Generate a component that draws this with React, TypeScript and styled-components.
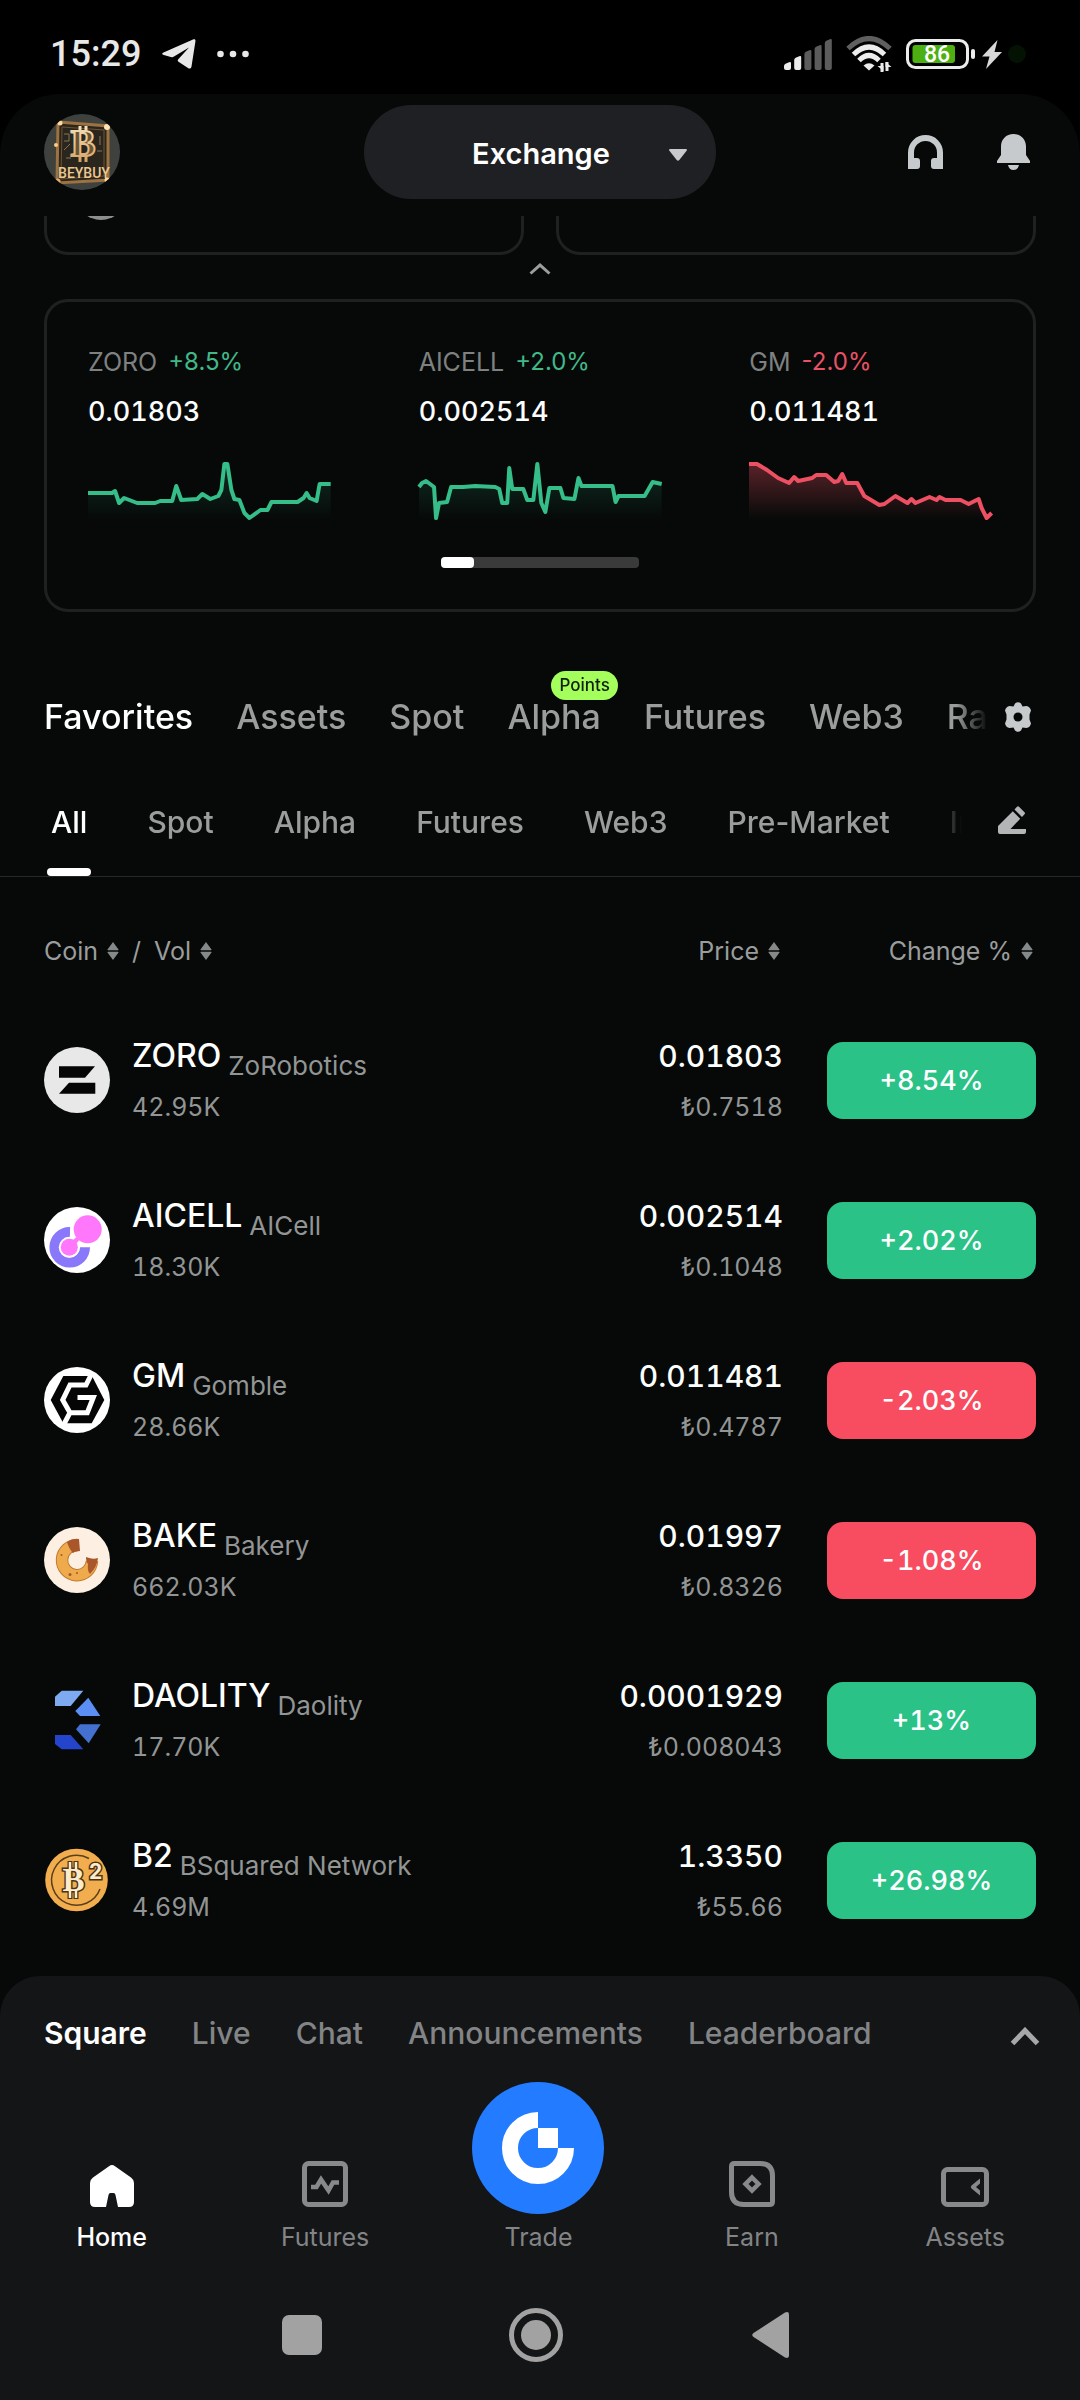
import React, { useState } from "react";
import styled, { createGlobalStyle } from "styled-components";

const color = {
  green: "#2bc287",
  red: "#f84c60",
  white: "#fdfefe",
  soft: "#c6cacc",
  mid: "#9b9d9d",
  dim: "#828486",
  line: "#1f2121",
  surface: "#060908",
  sheet: "#141517",
};

const GlobalStyle = createGlobalStyle`
  * { box-sizing: border-box; }
  body {
    margin: 0;
    background: #000;
    color: ${color.white};
    font-family: Inter, "Liberation Sans", sans-serif;
    -webkit-font-smoothing: antialiased;
  }
  button, select { font: inherit; color: inherit; background: none; border: 0; padding: 0; margin: 0; }
  svg { display: block; flex: none; }
`;

const Page = styled.div`
  min-height: 100vh;
  display: flex;
  flex-direction: column;
`;

/* ---------- status bar ---------- */

const StatusBar = styled.div`
  height: 94px;
  padding: 14px 54px 0 50px;
  display: flex;
  align-items: center;
  justify-content: space-between;
`;

const StatusGroup = styled.div<{ $gap: number }>`
  display: flex;
  align-items: center;
  gap: ${(p) => p.$gap}px;
`;

const Clock = styled.time`
  font: 500 36px/44px Roboto, sans-serif;
  color: #e8e8e8;
`;

/* ---------- app shell ---------- */

const Shell = styled.main`
  flex: 1;
  display: flex;
  flex-direction: column;
  background: ${color.surface};
  border-radius: 60px 60px 0 0;
`;

const Header = styled.header`
  display: grid;
  grid-template-columns: 1fr auto 1fr;
  align-items: center;
  padding: 11px 44px 17px;
`;

const IconButton = styled.button`
  display: flex;
  justify-content: center;
  align-items: center;
  cursor: pointer;
`;

const HeaderActions = styled.div`
  display: flex;
  justify-content: flex-end;
  gap: 54px;
  padding-right: 6px;
`;

const PickerWrap = styled.label`
  position: relative;
  display: block;
`;

const Picker = styled.select`
  appearance: none;
  width: 352px;
  height: 94px;
  padding: 2px 0 0 2px;
  border-radius: 47px;
  background: #1f2023;
  color: #fff;
  font-size: 29px;
  font-weight: 600;
  text-align: center;
  text-align-last: center;
`;

const PickerCaret = styled.svg`
  position: absolute;
  right: 29px;
  top: 44px;
  pointer-events: none;
`;

const CutCards = styled.div`
  height: 39px;
  margin: 0 44px;
  display: flex;
  align-items: flex-end;
  gap: 32px;
  overflow: hidden;
`;

const CutCard = styled.div`
  flex: 1;
  height: 120px;
  padding: 32px 29px;
  display: flex;
  align-items: flex-end;
  border: 3px solid ${color.line};
  border-radius: 24px;
`;

const CutAvatar = styled.div`
  width: 50px;
  height: 50px;
  border-radius: 50%;
  background: #8d8f8f;
`;

const Collapse = styled(IconButton)`
  height: 44px;
  padding-bottom: 16px;
`;

/* ---------- market card ---------- */

const MarketCard = styled.section`
  margin: 0 44px;
  padding: 45px 41px 41px;
  border: 3px solid ${color.line};
  border-radius: 24px;
`;

const Quotes = styled.div`
  display: grid;
  grid-template-columns: repeat(3, 1fr);
  gap: 88px;
`;

const QuoteHead = styled.div`
  display: flex;
  gap: 11px;
  font-size: 25px;
  line-height: 30px;
  color: #7f8181;
  white-space: nowrap;
`;

const Delta = styled.span<{ $up: boolean }>`
  font-size: 24px;
  color: ${(p) => (p.$up ? "#42b889" : "#e75266")};
`;

const QuotePrice = styled.div`
  margin: 17px 0 32px;
  font-size: 27px;
  line-height: 36px;
  font-weight: 500;
  font-variant-numeric: tabular-nums;
`;

const Spark = styled.svg`
  width: 100%;
  height: 60px;
  overflow: visible;
`;

const Pager = styled.div`
  width: 198px;
  height: 11px;
  margin: 35px auto 0;
  border-radius: 4px;
  background: #3a3a3a;
`;

const PagerThumb = styled.div`
  width: 33px;
  height: 11px;
  border-radius: 4px;
  background: #fff;
`;

/* ---------- tabs ---------- */

const TabBar = styled.div<{ $top?: number; $right: number; $line?: boolean; $h: number }>`
  display: flex;
  align-items: stretch;
  justify-content: space-between;
  margin-top: ${(p) => p.$top ?? 0}px;
  padding-right: ${(p) => p.$right}px;
  height: ${(p) => p.$h}px;
  border-bottom: ${(p) => (p.$line ? `1px solid #262828` : "0")};
`;

const TabScroll = styled.div<{ $left: number; $gap: number; $fade: number }>`
  flex: 1;
  min-width: 0;
  display: flex;
  gap: ${(p) => p.$gap}px;
  padding-left: ${(p) => p.$left}px;
  margin-right: 16px;
  overflow: hidden;
  mask-image: linear-gradient(to left, transparent ${(p) => p.$fade}px, #000 ${(p) => p.$fade + 32}px);
`;

const MainTab = styled.button<{ $on: boolean }>`
  position: relative;
  flex: none;
  font-size: 34px;
  line-height: 40px;
  font-weight: 500;
  color: ${(p) => (p.$on ? "#fff" : color.mid)};
  cursor: pointer;
`;

const Badge = styled.span`
  position: absolute;
  top: 0;
  left: 44px;
  height: 29px;
  padding: 0 8px;
  border-radius: 15px;
  background: #a4ff5c;
  color: #10200a;
  font-size: 17px;
  line-height: 29px;
`;

const SubTab = styled.button<{ $on: boolean }>`
  flex: none;
  display: flex;
  flex-direction: column;
  justify-content: space-between;
  padding: 41px 4px 0;
  font-size: 30px;
  line-height: 36px;
  font-weight: 500;
  color: ${(p) => (p.$on ? "#fff" : color.mid)};
  cursor: pointer;
  &::after {
    content: "";
    align-self: stretch;
    margin: 0 -4px;
    height: 8px;
    border-radius: 4px;
    background: ${(p) => (p.$on ? "#fff" : "transparent")};
  }
`;

/* ---------- coin table ---------- */

const TableWrap = styled.div`
  flex: 1;
  padding: 0 44px 15px;
`;

const Table = styled.table`
  width: 100%;
  border-collapse: collapse;
`;

const Th = styled.th<{ $right?: boolean }>`
  height: 123px;
  padding: 24px ${(p) => (p.$right ? 3 : 0)}px 0 0;
  font-size: 25px;
  line-height: 32px;
  font-weight: 400;
  color: ${color.mid};
  text-align: ${(p) => (p.$right ? "right" : "left")};
`;

const SortGroup = styled.span`
  display: inline-flex;
  gap: 13px;
`;

const SortButton = styled.button`
  display: inline-flex;
  align-items: center;
  gap: 9px;
  cursor: pointer;
`;

const Td = styled.td`
  height: 160px;
  padding: 0;
  vertical-align: middle;
`;

const ChangeTd = styled(Td)`
  width: 253px;
  padding-left: 44px;
`;

const CoinCell = styled.div`
  display: flex;
  align-items: center;
  gap: 22px;
`;

const CoinTitle = styled.div`
  display: flex;
  align-items: flex-start;
  gap: 7px;
`;

const Ticker = styled.span`
  font-size: 32px;
  line-height: 36px;
  font-weight: 500;
  color: #fff;
`;

const CoinName = styled.span`
  margin-top: 12px;
  font-size: 26px;
  line-height: 32px;
  color: #939595;
`;

const SubValue = styled.div<{ $gap: number }>`
  margin-top: ${(p) => p.$gap}px;
  font-size: 25px;
  line-height: 32px;
  color: #939595;
  font-variant-numeric: tabular-nums;
`;

const PriceCell = styled.div`
  text-align: right;
  font-size: 30px;
  line-height: 36px;
  font-weight: 500;
  font-variant-numeric: tabular-nums;
  ${SubValue} { font-weight: 400; }
`;

const ChangeButton = styled.button<{ $up: boolean }>`
  display: block;
  width: 100%;
  height: 77px;
  border-radius: 16px;
  background: ${(p) => (p.$up ? color.green : color.red)};
  color: #fff;
  font-size: 27px;
  font-weight: 500;
  font-variant-numeric: tabular-nums;
  cursor: pointer;
`;

/* ---------- bottom sheet ---------- */

const Sheet = styled.footer`
  background: ${color.sheet};
  border-radius: 40px 40px 0 0;
`;

const SheetBack = styled.div`
  position: sticky;
  bottom: 0;
  background: ${color.surface};
`;

const SheetTabs = styled.div`
  height: 106px;
  padding: 8px 40px 0 44px;
  display: flex;
  align-items: center;
  gap: 45px;
`;

const SheetTab = styled.button<{ $on: boolean }>`
  font-size: 30px;
  line-height: 36px;
  font-weight: ${(p) => (p.$on ? 600 : 500)};
  color: ${(p) => (p.$on ? "#fff" : color.dim)};
  cursor: pointer;
`;

const SheetToggle = styled(IconButton)`
  margin-left: auto;
  padding-top: 6px;
`;

const Nav = styled.nav`
  display: grid;
  grid-template-columns: repeat(5, 1fr);
  padding: 0 8px 0 5px;
  height: 170px;
`;

const NavItem = styled.a<{ $on?: boolean; $gap?: number }>`
  display: flex;
  flex-direction: column;
  align-items: center;
  justify-content: flex-end;
  gap: ${(p) => p.$gap ?? 15}px;
  font-size: 25px;
  line-height: 30px;
  font-weight: ${(p) => (p.$on ? 500 : 400)};
  color: ${(p) => (p.$on ? "#fff" : color.dim)};
  text-decoration: none;
`;

const SystemNav = styled.div`
  height: 148px;
  padding: 18px 8px 0 0;
  display: flex;
  align-items: center;
  justify-content: center;
  gap: 180px;
`;

const SystemButton = styled(IconButton)`
  width: 54px;
  height: 54px;
`;

/* ---------- drawings ---------- */

const Telegram = () => (
  <svg width="34" height="30" viewBox="0 0 34 30" fill="#e8e8e8">
    <path d="M1.500 13.500 31 .6c2-.8 2.700 0 2.400 2L29.500 27.500c-.4 2-1.800 2.600-3.500 1.500l-9.500-6.200c-1-.8-1-1.600-.2-2.500L27 8.500 12 17.600c-1.200.7-2 .8-3.200.4L1.800 15.900c-2-.6-2-1.700-.3-2.400z" />
  </svg>
);

const Dots = () => (
  <svg width="32" height="8" viewBox="0 0 32 8" fill="#e8e8e8">
    <circle cx="3.500" cy="4" r="3.300" />
    <circle cx="16" cy="4" r="3.300" />
    <circle cx="28.500" cy="4" r="3.300" />
  </svg>
);

const Signal = () => (
  <svg width="48" height="31" viewBox="0 0 48 31">
    {[8, 14, 20, 25, 31].map((h, i) => (
      <path
        key={h}
        d={`M${i * 10.2} ${31 - h + 4}q0-1.500 1.500-2.200l3.500-1.600q2-.8 2 1V29q0 2-2 2h-3q-2 0-2-2z`}
        fill={i < 2 ? "#ececec" : "#5c5c5c"}
      />
    ))}
  </svg>
);

const Wifi = () => (
  <svg width="46" height="36" viewBox="0 0 46 36" fill="none">
    <path d="M2 12.500Q23-7.500 44 12.500" stroke="#5f5f5f" strokeWidth="5" />
    <path d="M7.500 18.500Q23 3.500 38.500 18.500" stroke="#ececec" strokeWidth="5" />
    <path d="M13 24.500Q23 14.500 33 24.500" stroke="#ececec" strokeWidth="5" />
    <path d="M17.500 29.500Q23 25 28.500 29.500L23 34.500z" fill="#ececec" />
    <path d="M36 36v-9M41 26v9" stroke="#ececec" strokeWidth="3" />
    <path d="M31.500 30h6v5zM45.500 31h-6v-5z" fill="#ececec" />
  </svg>
);

const Battery = () => (
  <svg width="70" height="30" viewBox="0 0 70 30">
    <rect x="1.500" y="1.500" width="60" height="27" rx="8" fill="none" stroke="#ececec" strokeWidth="3" />
    <rect x="6.500" y="6" width="42.500" height="18" rx="3" fill="#4caf12" />
    <rect x="65" y="10" width="4" height="10" rx="2" fill="#ececec" />
    <text x="31" y="23" textAnchor="middle" fontFamily="Roboto, sans-serif" fontWeight="500" fontSize="23" fill="#fff">
      86
    </text>
  </svg>
);

const Bolt = () => (
  <svg width="20" height="29" viewBox="0 0 20 29">
    <path d="M15.500 0 0 16.500h7.500L4 29 20 12h-7.500z" fill="#d8d8d8" />
  </svg>
);

const CameraDot = () => (
  <svg width="18" height="18" viewBox="0 0 18 18">
    <circle cx="9" cy="9" r="9" fill="#041204" />
  </svg>
);

const Avatar = () => (
  <svg width="76" height="76" viewBox="0 0 76 76">
    <defs>
      <radialGradient id="av" cx="50%" cy="50%" r="50%">
        <stop offset="0" stopColor="#4a3c28" />
        <stop offset="1" stopColor="#3d4240" />
      </radialGradient>
      <linearGradient id="gold" x1="0" y1="0" x2="0" y2="1">
        <stop offset="0" stopColor="#f6e3bd" />
        <stop offset="1" stopColor="#d3a363" />
      </linearGradient>
      <clipPath id="avClip">
        <circle cx="38" cy="38" r="38" />
      </clipPath>
    </defs>
    <g clipPath="url(#avClip)">
      <rect width="76" height="76" fill="url(#av)" />
      <path d="M14 8 64 12 64 66 13 69z" fill="#2b261d" stroke="#9c7240" strokeWidth="3" />
      <path d="M18 13 60 16 60 62 17 65z" fill="none" stroke="#6d5433" strokeWidth="1" />
      <path d="M20 20h5v7h-5M20 36l6-6M22 44h5M56 22v9M53 37h5" stroke="#84755a" fill="none" />
      <path d="M36 12v6M42 12v6M36 42v6M42 42v6" stroke="url(#gold)" strokeWidth="3" />
      <text x="39" y="42" textAnchor="middle" fontFamily="Liberation Serif, serif" fontWeight="700" fontSize="37" fill="#6b5332" stroke="url(#gold)" strokeWidth="2">
        B
      </text>
      <text x="40" y="64" textAnchor="middle" fontFamily="Roboto, sans-serif" fontWeight="500" fontSize="14" fill="#ecc993">
        BEYBUY
      </text>
      <circle cx="16" cy="9" r="2.500" fill="#ffd9a0" />
      <circle cx="63" cy="13" r="3" fill="#ffe2b8" />
      <circle cx="12" cy="31" r="2" fill="#ffca85" />
      <circle cx="63" cy="66" r="2.500" fill="#ffd9a0" />
      <circle cx="14" cy="67" r="2.500" fill="#e9a765" />
    </g>
  </svg>
);

const Headphones = () => (
  <svg width="35" height="34" viewBox="0 0 35 34" fill={color.soft}>
    <path d="M0 34V17.500a17.500 17.500 0 0 1 35 0V34H26q-3 0-3-3v-5q0-3 3-3h3v-5.500a11.500 11.500 0 0 0-23 0V23h3q3 0 3 3v5q0 3-3 3z" />
  </svg>
);

const Bell = () => (
  <svg width="33" height="36" viewBox="0 0 33 36" fill={color.soft}>
    <path d="M16.500 0C24 0 29 5.500 29 12.500V21l4 6v2H0v-2l4-6v-8.500C4 5.500 9 0 16.500 0zM11 31h11q-1 5-5.500 5T11 31z" />
  </svg>
);

const Gear = () => (
  <svg width="28" height="30" viewBox="0 0 28 30">
    <path
      d="M11 1.500Q14-1 17 1.500L18.500 4.500 22.500 4Q26 4.500 27 8.500L25.500 12.500V17.500L27 21.500Q26 25.500 22.500 26L18.500 25.500 17 28.500Q14 31 11 28.500L9.500 25.500 5.500 26Q2 25.500 1 21.500L2.500 17.500V12.500L1 8.500Q2 4.500 5.500 4L9.500 4.500z"
      fill={color.soft}
    />
    <circle cx="14" cy="15" r="4.500" fill={color.surface} />
  </svg>
);

const Pencil = () => (
  <svg width="28" height="28" viewBox="0 0 28 28" fill="#b3b5b6">
    <path d="M19 .8q1-1 2 0l5.500 5.500q1 1 0 2L24 11l-7.500-7.500zM14.800 5.300 22.200 12.700 12.500 23H28v3q0 2-2 2H2q-2 0-2-2v-6z" />
  </svg>
);

const SortArrows = () => (
  <svg width="12" height="18" viewBox="0 0 12 18" fill="#868989">
    <path d="M6 0l5.500 7.500q.3.800-.6.800H1.100Q.2 8.300.5 7.500zM6 18l5.500-7.500q.3-.8-.6-.8H1.100q-.9 0-.6.800z" />
  </svg>
);

const ChevronUp = ({ w, h, stroke, width }: { w: number; h: number; stroke: string; width: number }) => (
  <svg width={w} height={h} viewBox={`0 0 ${w} ${h}`} fill="none">
    <path d={`M${width / 2} ${h - width / 2}L${w / 2} ${width * 0.7}L${w - width / 2} ${h - width / 2}`} stroke={stroke} strokeWidth={width} />
  </svg>
);

const coinIcons: Record<string, React.ReactNode> = {
  ZORO: (
    <>
      <circle cx="33" cy="33" r="33" fill="#e8e8e8" />
      <path d="M15 19.300H51L41 30.700H15zM25 35.700H51.300V46.700H15z" fill="#050505" />
    </>
  ),
  AICELL: (
    <>
      <circle cx="33" cy="33" r="33" fill="#fff" />
      <path d="M26 25A15.300 15.300 0 1 0 41 40.300" fill="none" stroke="#8a78fb" strokeWidth="10" />
      <circle cx="43.700" cy="22.300" r="16" fill="#fff" />
      <circle cx="25.300" cy="40.300" r="10.500" fill="#fff" />
      <path d="M29 33l6-5 2 3-5 6z" fill="#ff77fb" />
      <circle cx="43.700" cy="22.300" r="14" fill="#ff77fb" />
      <circle cx="25.300" cy="40.300" r="8.500" fill="#ff77fb" />
    </>
  ),
  GM: (
    <>
      <circle cx="33" cy="33" r="33" fill="#fff" />
      <path d="M19.300 9H48L60.300 33 47.700 56.300H19.300L6.700 33z" fill="#050505" />
      <path d="M48 6 42 18H26L18.700 33 26 45.700H43.300L49.300 30.500H33.500M26 45.700 19 59" fill="none" stroke="#fff" strokeWidth="5" />
    </>
  ),
  BAKE: (
    <>
      <circle cx="33" cy="33" r="33" fill="#fdf0e3" />
      <path d="M34 18.200A15 15 0 1 0 48 34" fill="none" stroke="#c07a35" strokeWidth="12.500" />
      <path d="M34 18.200A15 15 0 1 0 48 34" fill="none" stroke="#efab4b" strokeWidth="10.500" />
      <path d="M23 15q6-4 12-3l1 12q-5 0-7 2-4-4-6-11zM42 30q7 3 12 1-1 9-8 16-3-3-2-10-2-2-2-7z" fill="#a9562a" />
      <circle cx="26" cy="47.500" r="1.500" fill="#a9562a" />
      <circle cx="33" cy="46" r="1" fill="#a9562a" />
      <circle cx="17.500" cy="28" r="1" fill="#a9562a" />
    </>
  ),
  DAOLITY: (
    <>
      <path d="M17.700 3.700H39.300L26.700 19H11V9.700z" fill="#7eaaf2" />
      <path d="M44.300 10.700 56.300 29H36L31.300 24z" fill="#5c8ff3" />
      <path d="M36 37.300H56.700L44.700 56.300 32 42.300z" fill="#4470d0" />
      <path d="M11 48H26.700L39.300 62.300H17.700L11 57z" fill="#2445cb" />
    </>
  ),
  B2: (
    <>
      <circle cx="32.500" cy="33" r="31.300" fill="#f1ad4e" />
      <path d="M45 11.500A25 25 0 1 0 56 42" fill="none" stroke="#5a3f1c" strokeWidth="1.500" />
      <path d="M26 14v8M32 14v8M26 44v8M32 44v8" stroke="#4b3415" strokeWidth="5" />
      <text x="29.500" y="44" textAnchor="middle" fontFamily="Liberation Serif, serif" fontWeight="700" fontSize="33" fill="#fdeccb" stroke="#4b3415" strokeWidth="3" paintOrder="stroke">
        B
      </text>
      <path d="M26 15v8M32 15v8M26 43v8M32 43v8" stroke="#fdeccb" strokeWidth="2.500" />
      <text x="51.500" y="32" textAnchor="middle" fontFamily="Inter, sans-serif" fontWeight="700" fontSize="21" fill="#fdeccb" stroke="#4b3415" strokeWidth="3" paintOrder="stroke">
        2
      </text>
    </>
  ),
};

/* ---------- data ---------- */

type Quote = { id: string; delta: string; up: boolean; price: string; points: string };

const quotes: Quote[] = [
  {
    id: "ZORO",
    delta: "+8.5%",
    up: true,
    price: "0.01803",
    points:
      "0,31 24,31 27,29 31,41 36,36 49,41 67,41 72,39 84,39 88,24 93,38 109,37 114,32 122,37 130,34 133,28 136,2 139,2 143,28 146,37 151,38 156,51 161,56 172,48 179,48 183,40 209,40 215,36 218,31 221,36 228,39 231,22 242,22",
  },
  {
    id: "AICELL",
    delta: "+2.0%",
    up: true,
    price: "0.002514",
    points:
      "0,25 3,21 7,19 15,25 17,56 20,41 28,40 32,25 44,25 56,24 76,25 80,27 83,41 88,41 90,6 93,27 104,27 108,38 114,38 118,2 122,41 126,50 130,26 141,26 144,36 155,37 159,16 162,24 193,24 196,40 199,34 225,34 233,20 242,22",
  },
  {
    id: "GM",
    delta: "-2.0%",
    up: false,
    price: "0.011481",
    points:
      "0,2 8,2 18,8 29,16 40,21 45,15 49,19 63,16 67,13 77,13 85,20 89,19 93,12 97,21 108,21 115,34 130,43 135,42 146,34 158,41 162,37 166,41 180,35 187,38 190,35 196,38 211,38 219,42 229,37 232,46 237,56 242,51",
  },
];

const coins = [
  { id: "ZORO", name: "ZoRobotics", vol: "42.95K", price: "0.01803", fiat: "₺0.7518", change: "+8.54%" },
  { id: "AICELL", name: "AICell", vol: "18.30K", price: "0.002514", fiat: "₺0.1048", change: "+2.02%" },
  { id: "GM", name: "Gomble", vol: "28.66K", price: "0.011481", fiat: "₺0.4787", change: "-2.03%" },
  { id: "BAKE", name: "Bakery", vol: "662.03K", price: "0.01997", fiat: "₺0.8326", change: "-1.08%" },
  { id: "DAOLITY", name: "Daolity", vol: "17.70K", price: "0.0001929", fiat: "₺0.008043", change: "+13%" },
  { id: "B2", name: "BSquared Network", vol: "4.69M", price: "1.3350", fiat: "₺55.66", change: "+26.98%" },
];

const mainTabs = ["Favorites", "Assets", "Spot", "Alpha", "Futures", "Web3", "Rank"];
const subTabs = ["All", "Spot", "Alpha", "Futures", "Web3", "Pre-Market", "Innovation"];
const sheetTabs = ["Square", "Live", "Chat", "Announcements", "Leaderboard"];

const Sparkline = ({ quote }: { quote: Quote }) => {
  const stroke = quote.up ? "#35bd8a" : "#ee5063";
  return (
    <Spark viewBox="0 0 242 60" preserveAspectRatio="none" aria-hidden="true">
      <defs>
        <linearGradient id={`fill-${quote.id}`} x1="0" y1="0" x2="0" y2="1">
          <stop offset="0" stopColor={stroke} stopOpacity={quote.up ? 0.2 : 0.36} />
          <stop offset="1" stopColor={stroke} stopOpacity="0" />
        </linearGradient>
      </defs>
      <polygon points={`0,58 ${quote.points} 242,58`} fill={`url(#fill-${quote.id})`} />
      <polyline points={quote.points} fill="none" stroke={stroke} strokeWidth="4" strokeLinejoin="round" />
    </Spark>
  );
};

export default function App() {
  const [mainTab, setMainTab] = useState("Favorites");
  const [subTab, setSubTab] = useState("All");
  const [sheetTab, setSheetTab] = useState("Square");

  return (
    <>
      <GlobalStyle />
      <Page>
        <StatusBar>
          <StatusGroup $gap={21}>
            <Clock>15:29</Clock>
            <Telegram />
            <Dots />
          </StatusGroup>
          <StatusGroup $gap={6}>
            <StatusGroup $gap={14}>
              <Signal />
              <Wifi />
              <Battery />
            </StatusGroup>
            <Bolt />
            <CameraDot />
          </StatusGroup>
        </StatusBar>

        <Shell>
          <Header>
            <div>
              <IconButton aria-label="Profile">
                <Avatar />
              </IconButton>
            </div>
            <PickerWrap>
              <Picker aria-label="Section" defaultValue="Exchange">
                <option>Exchange</option>
                <option>Web3</option>
              </Picker>
              <PickerCaret width="18" height="12" viewBox="0 0 18 12" aria-hidden="true">
                <path d="M1 0h16q1.500.3.600 1.800L10.300 11q-1.300 1.600-2.600 0L.4 1.800Q-.5.3 1 0z" fill={color.soft} />
              </PickerCaret>
            </PickerWrap>
            <HeaderActions>
              <IconButton aria-label="Support">
                <Headphones />
              </IconButton>
              <IconButton aria-label="Notifications">
                <Bell />
              </IconButton>
            </HeaderActions>
          </Header>

          <CutCards>
            <CutCard>
              <CutAvatar />
            </CutCard>
            <CutCard />
          </CutCards>
          <Collapse aria-label="Collapse">
            <ChevronUp w={22} h={12} stroke="#9c9e9e" width={3} />
          </Collapse>

          <MarketCard>
            <Quotes>
              {quotes.map((q) => (
                <div key={q.id}>
                  <QuoteHead>
                    <span>{q.id}</span>
                    <Delta $up={q.up}>{q.delta}</Delta>
                  </QuoteHead>
                  <QuotePrice>{q.price}</QuotePrice>
                  <Sparkline quote={q} />
                </div>
              ))}
            </Quotes>
            <Pager>
              <PagerThumb />
            </Pager>
          </MarketCard>

          <TabBar $top={59} $h={92} $right={48}>
            <TabScroll $left={44} $gap={43} $fade={0}>
              {mainTabs.map((t) => (
                <MainTab key={t} $on={t === mainTab} onClick={() => setMainTab(t)}>
                  {t}
                  {t === "Alpha" && <Badge>Points</Badge>}
                </MainTab>
              ))}
            </TabScroll>
            <IconButton aria-label="Tab settings">
              <Gear />
            </IconButton>
          </TabBar>

          <TabBar $h={114} $right={54} $line>
            <TabScroll $left={47} $gap={52} $fade={20}>
              {subTabs.map((t) => (
                <SubTab key={t} $on={t === subTab} onClick={() => setSubTab(t)}>
                  {t}
                </SubTab>
              ))}
            </TabScroll>
            <IconButton aria-label="Edit favorites">
              <Pencil />
            </IconButton>
          </TabBar>

          <TableWrap>
            <Table>
              <thead>
                <tr>
                  <Th scope="col">
                    <SortGroup>
                      <SortButton>
                        Coin
                        <SortArrows />
                      </SortButton>
                      <span>/</span>
                      <SortButton>
                        Vol
                        <SortArrows />
                      </SortButton>
                    </SortGroup>
                  </Th>
                  <Th scope="col" $right>
                    <SortButton>
                      Price
                      <SortArrows />
                    </SortButton>
                  </Th>
                  <Th scope="col" $right>
                    <SortButton>
                      Change %
                      <SortArrows />
                    </SortButton>
                  </Th>
                </tr>
              </thead>
              <tbody>
                {coins.map((c) => (
                  <tr key={c.id}>
                    <Td>
                      <CoinCell>
                        <svg width="66" height="66" viewBox="0 0 66 66" aria-hidden="true">
                          {coinIcons[c.id]}
                        </svg>
                        <div>
                          <CoinTitle>
                            <Ticker>{c.id}</Ticker>
                            <CoinName>{c.name}</CoinName>
                          </CoinTitle>
                          <SubValue $gap={9}>{c.vol}</SubValue>
                        </div>
                      </CoinCell>
                    </Td>
                    <Td>
                      <PriceCell>
                        {c.price}
                        <SubValue $gap={17}>{c.fiat}</SubValue>
                      </PriceCell>
                    </Td>
                    <ChangeTd>
                      <ChangeButton $up={c.change.startsWith("+")}>{c.change}</ChangeButton>
                    </ChangeTd>
                  </tr>
                ))}
              </tbody>
            </Table>
          </TableWrap>
        </Shell>

        <SheetBack>
          <Sheet>
            <SheetTabs>
              {sheetTabs.map((t) => (
                <SheetTab key={t} $on={t === sheetTab} onClick={() => setSheetTab(t)}>
                  {t}
                </SheetTab>
              ))}
              <SheetToggle aria-label="Expand feed">
                <ChevronUp w={30} h={19} stroke="#a6a8a9" width={5} />
              </SheetToggle>
            </SheetTabs>
            <Nav>
              <NavItem href="#home" $on>
                <svg width="44" height="42" viewBox="0 0 44 42" fill="#fff">
                  <path d="M19 1.200q3-2.200 6 0L41 12.500q3 2.200 3 5.500V37q0 5-5 5H28L25.500 30q-.4-2-2-2h-3q-1.600 0-2 2L16 42H5q-5 0-5-5V18q0-3.300 3-5.500z" />
                </svg>
                Home
              </NavItem>
              <NavItem href="#futures">
                <svg width="46" height="46" viewBox="0 0 46 46" fill="none" stroke="#88898b">
                  <rect x="2.500" y="2.500" width="41" height="41" rx="4" strokeWidth="5" />
                  <path d="M9 26h5.500L19 18.500 26.500 29.500 31 21.500h6" strokeWidth="4.500" />
                </svg>
                Futures
              </NavItem>
              <NavItem href="#trade" $gap={8}>
                <svg width="132" height="132" viewBox="0 0 132 132">
                  <circle cx="66" cy="66" r="66" fill="#237cff" />
                  <path d="M66 38A28 28 0 1 0 94 66" fill="none" stroke="#fff" strokeWidth="16" />
                  <rect x="66" y="46" width="20" height="20" fill="#fff" />
                </svg>
                Trade
              </NavItem>
              <NavItem href="#earn">
                <svg width="46" height="46" viewBox="0 0 46 46" fill="none" stroke="#88898b">
                  <path d="M5.500 2.500H31q12.500 0 12.500 12.500V40.500q0 3-3 3H15Q2.500 43.500 2.500 31V5.500q0-3 3-3z" strokeWidth="5" />
                  <path d="M23 16.500 29.500 23 23 29.500 16.500 23z" strokeWidth="4.500" />
                </svg>
                Earn
              </NavItem>
              <NavItem href="#assets">
                <svg width="48" height="40" viewBox="0 0 48 40" fill="none" stroke="#88898b">
                  <rect x="2.500" y="2.500" width="43" height="35" rx="4" strokeWidth="5" />
                  <path d="M39 11.500v5l-4 3.500 4 3.500v5l-8.500-7q-1.500-1.500 0-3z" fill="#88898b" stroke="none" />
                </svg>
                Assets
              </NavItem>
            </Nav>
            <SystemNav>
              <SystemButton aria-label="Recent apps">
                <svg width="40" height="40" viewBox="0 0 40 40">
                  <rect width="40" height="40" rx="7" fill="#a3a2a2" />
                </svg>
              </SystemButton>
              <SystemButton aria-label="Home screen">
                <svg width="54" height="54" viewBox="0 0 54 54">
                  <circle cx="27" cy="27" r="24.500" fill="none" stroke="#a3a2a2" strokeWidth="5" />
                  <circle cx="27" cy="27" r="15" fill="#a3a2a2" />
                </svg>
              </SystemButton>
              <SystemButton aria-label="Back">
                <svg width="37" height="46" viewBox="0 0 37 46">
                  <path d="M33 .6q4-1.600 4 2V43.400q0 3.600-4 2L1.500 25q-2.500-2 0-4z" fill="#a3a2a2" />
                </svg>
              </SystemButton>
            </SystemNav>
          </Sheet>
        </SheetBack>
      </Page>
    </>
  );
}
